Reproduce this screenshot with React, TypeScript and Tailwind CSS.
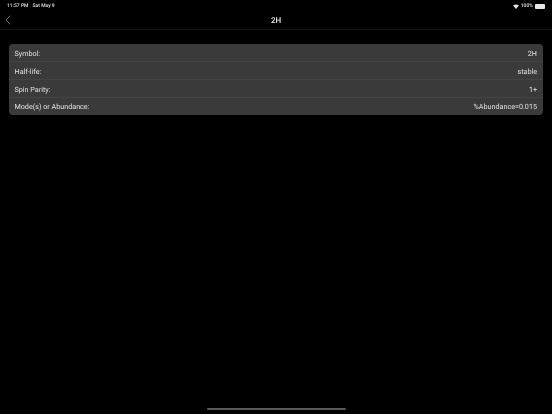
export default function App() {
  const rows: [string, string, string][] = [
    ["Symbol:", "2H", "h-[18px] pt-[3px] border-b border-[#444444]"],
    ["Half-life:", "stable", "h-[18px] pt-[3px] border-b border-[#444444]"],
    ["Spin Parity:", "1+", "h-[18px] pt-[3px] border-b border-[#444444]"],
    ["Mode(s) or Abundance:", "%Abundance=0.015", "h-[17px] pt-[2px]"],
  ];
  return (
    <div className="w-[552px] h-[414px] bg-black flex flex-col overflow-hidden text-white [text-rendering:geometricPrecision] [will-change:transform]" style={{ fontFamily: 'Roboto, sans-serif' }}>
      <div className="h-[10px] shrink-0 flex items-center justify-between pl-[7px] pr-[7px] pt-[2.5px] text-[5px] text-[#e0e0e0] font-medium">
        <div className="flex gap-[4px]">
          <span>11:57 PM</span>
          <span>Sat May 9</span>
        </div>
        <div className="flex items-center gap-[2px]">
          <svg width="6" height="5" viewBox="0 0 12 10">
            <path d="M6 10 L0 3.2 C3.5 0 8.5 0 12 3.2 Z" fill="#e0e0e0" />
          </svg>
          <span>100%</span>
          <div className="w-[10px] h-[5px] rounded-[1px] bg-[#e8e8e8]" />
        </div>
      </div>
      <div className="h-[20px] shrink-0 flex items-center border-b border-[#111111] relative">
        <svg className="ml-[5px] mt-[1px]" width="6" height="10" viewBox="0 0 6 10" fill="none">
          <path d="M5 0.7 L1 5 L5 9.3" stroke="#8a8a8a" strokeWidth="0.8" />
        </svg>
        <span className="absolute left-0 right-0 top-[5px] text-center text-[8px] font-medium text-[#e6e6e6]">2H</span>
      </div>
      <div className="mt-[14px] mx-[9px] rounded-[4px] bg-[#3a3a3a] flex flex-col">
        {rows.map(([k, v, c]) => (
          <div key={k} className={`${c} flex items-center justify-between pl-[5.5px] pr-[6px] text-[7.2px] text-[#e2e2e2]`}>
            <span>{k}</span>
            <span>{v}</span>
          </div>
        ))}
      </div>
      <div className="flex-1" />
      <div className="h-[2px] w-[139px] mx-auto mb-[4px] rounded-full bg-[#5a5a5a]" />
    </div>
  );
}
